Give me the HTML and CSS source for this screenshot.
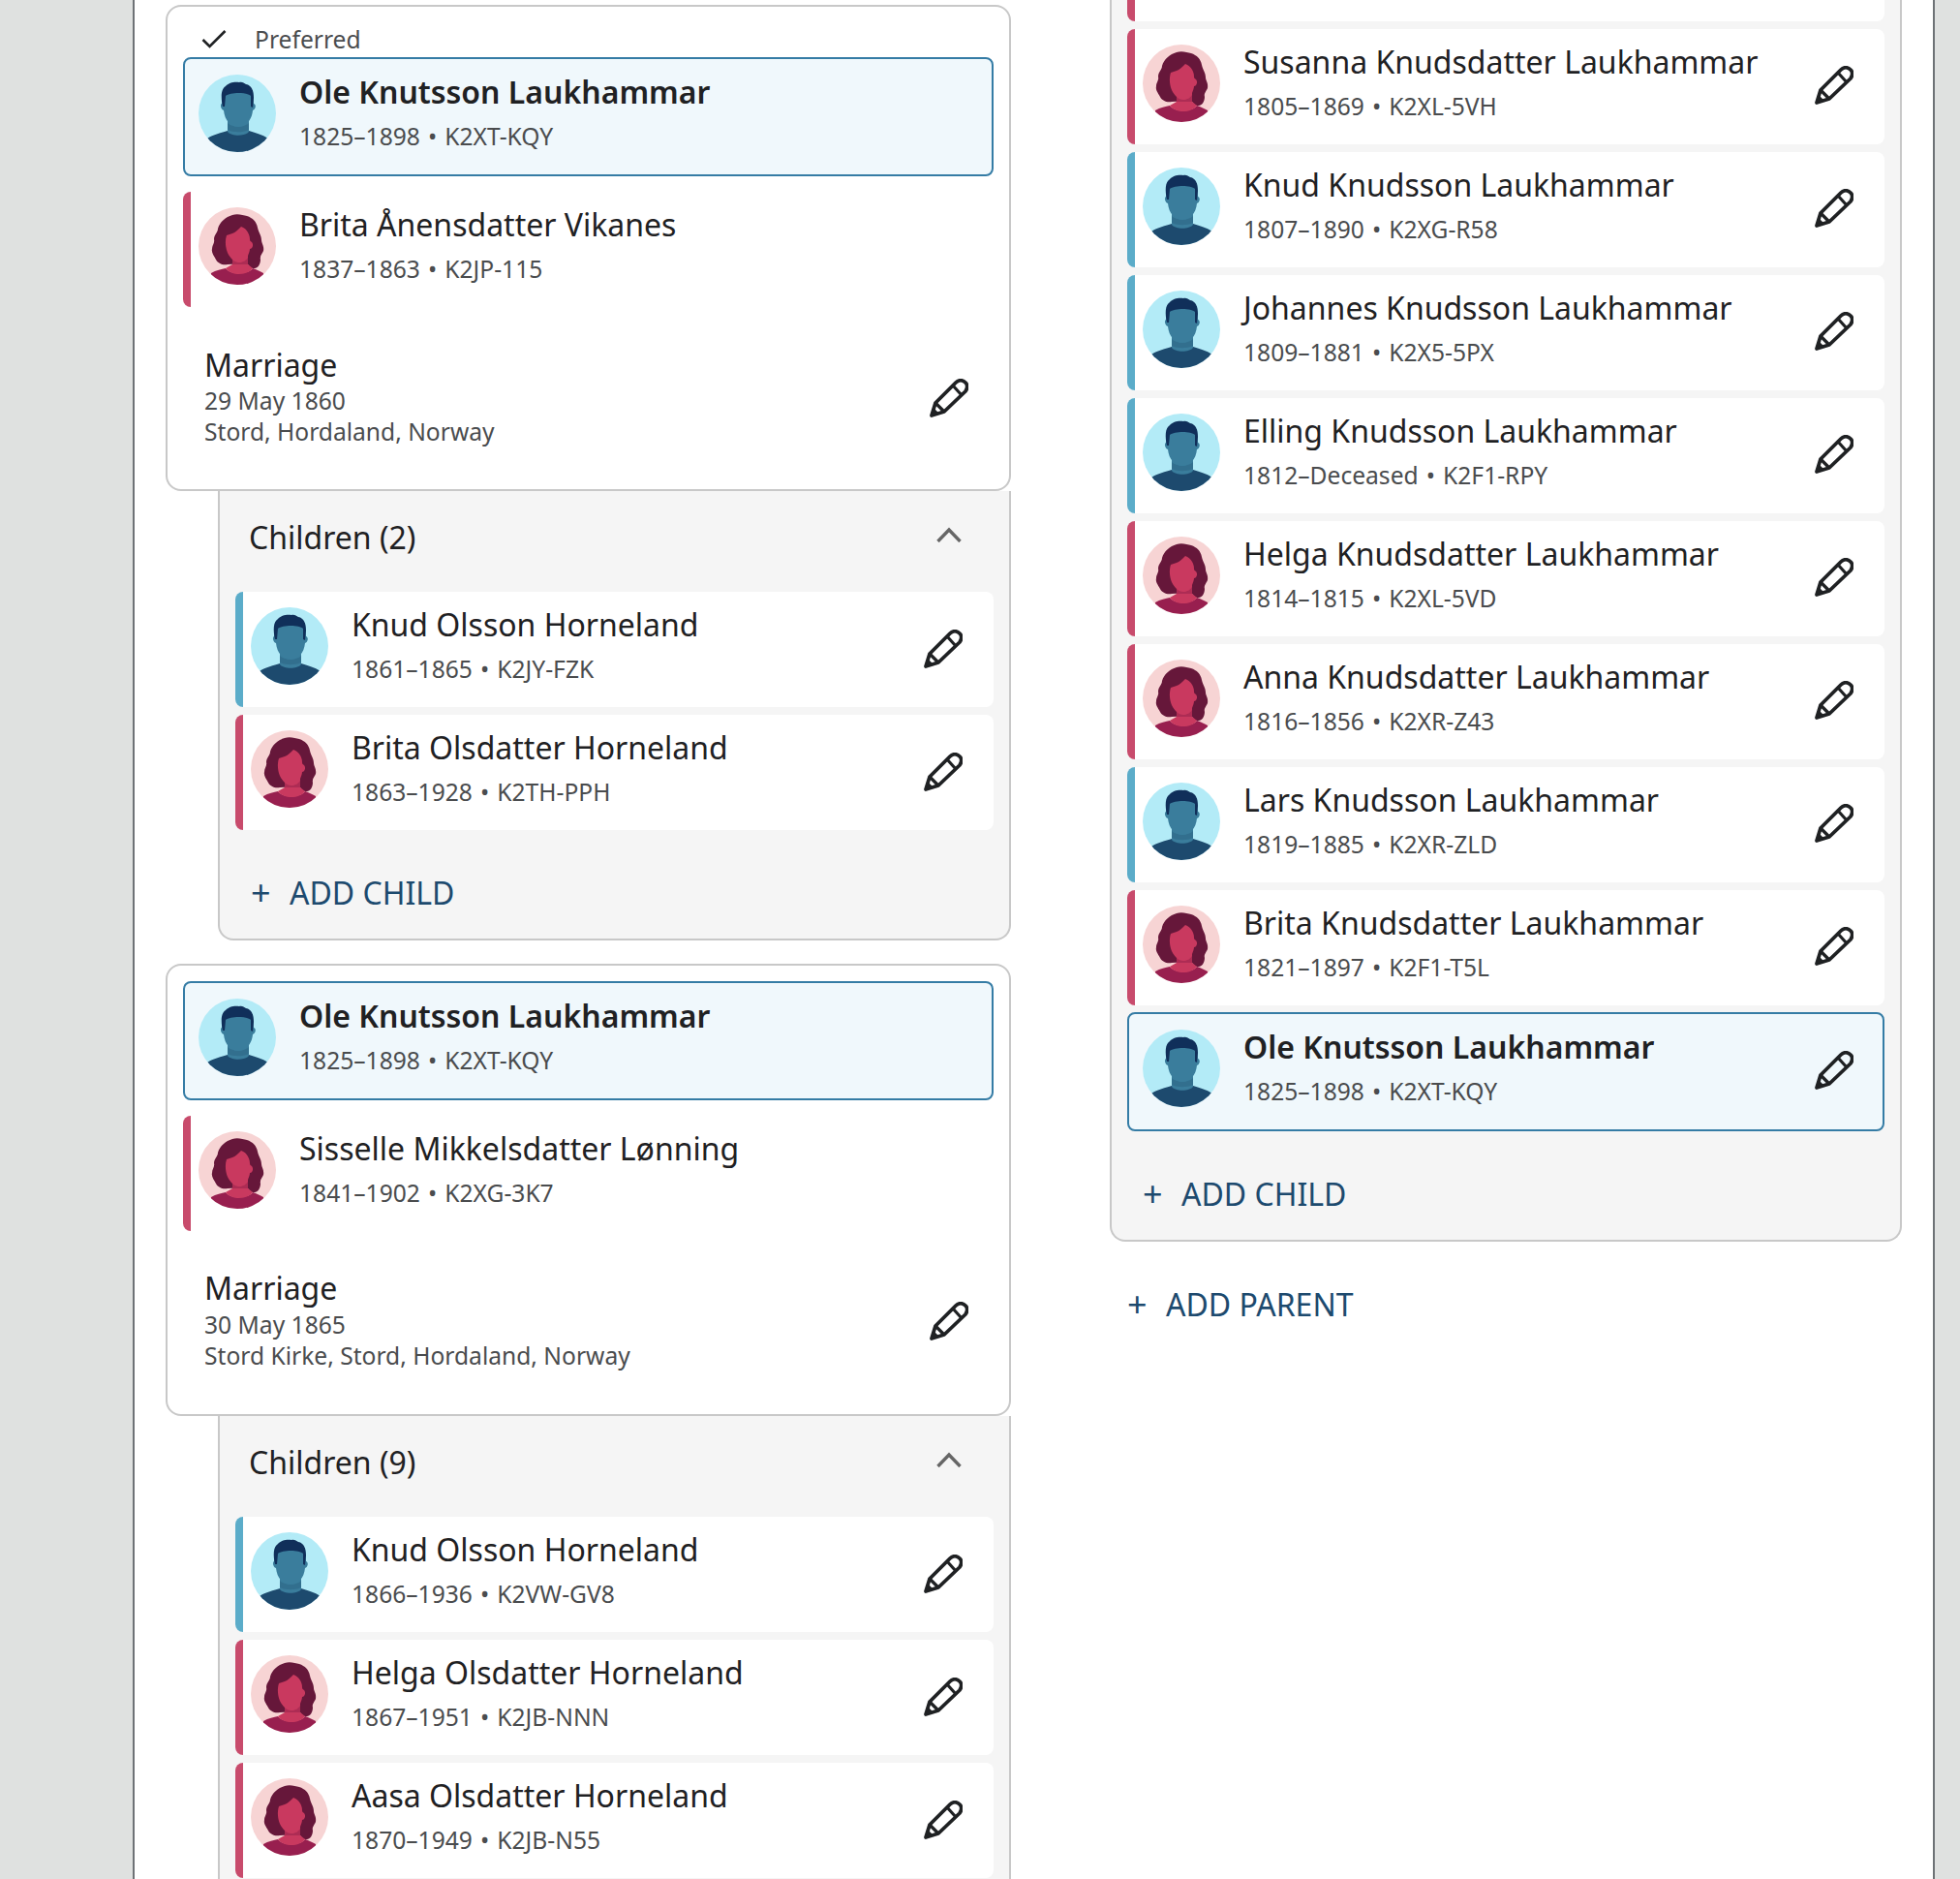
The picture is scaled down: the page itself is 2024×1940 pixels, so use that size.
FILE: index.html
```html
<!DOCTYPE html>
<html lang="en">
<head>
  <meta charset="UTF-8" />
  <title>Family Members</title>
  <link rel="stylesheet" href="styles.css">
</head>
<body>
  <svg class="defs" width="0" height="0">
    <defs>
      <clipPath id="disc"><circle cx="40" cy="40" r="40"/></clipPath>
      <symbol id="male" viewBox="0 0 80 80">
        <circle cx="40" cy="40" r="40" fill="#b3ebf7"/>
        <g clip-path="url(#disc)">
          <path d="M9 66 C15 62 24 60 30 58 L52 58 C58 60 66 62 72 66 L72 80 L9 80 Z" fill="#1d4a6e"/>
          <path d="M30 46 L52 46 L52 59 C48 64 34 64 30 59 Z" fill="#3a7d9c"/>
          <path d="M30 50 C35 55 47 55 52 50 L52 57 C46 60 36 60 30 57 Z" fill="#326f8e"/>
          <path d="M24 30 C22 31 23 36 26 37 C27 47 33 54 41 54 C49 54 55 47 56 37 C59 36 60 31 57 30 L56 16 L26 16 Z" fill="#3a7d9c"/>
          <path d="M25 33 C23 24 23 15 28 12 C31 8 38 7 42 8 C45 7 47 9 49 10 C55 11 57 17 57 24 L56 34 L54 33 L54 22 C50 18 33 18 28 22 L27 33 Z" fill="#102f5a"/>
        </g>
      </symbol>
      <symbol id="female" viewBox="0 0 80 80">
        <circle cx="40" cy="40" r="40" fill="#f7d4d4"/>
        <g clip-path="url(#disc)">
          <path d="M35 8 C40 6 46 8 50 9 C56 11 60 15 61 21 C62 26 65 29 65 34 C65 37 68 40 67 45 C66 48 63 50 64 54 C64 59 61 63 58 63 C54 64 52 60 50 58 L30 59 C25 60 20 58 18 54 C16 50 13 47 14 43 C14 39 17 37 16 33 C16 28 20 26 20 22 C22 15 28 10 35 8 Z" fill="#66173a"/>
          <path d="M35 50 L51 50 L51 70 L35 70 Z" fill="#c9395f"/>
          <path d="M35 52 C39 58 47 58 51 52 L51 60 C46 64 40 64 35 60 Z" fill="#ad2c54"/>
          <path d="M13 68 C18 65 24 64 28 63 C33 70 51 70 56 63 C60 64 63 66 67 68 L67 80 L13 80 Z" fill="#981f4f"/>
          <path d="M28 63 L35 59 L51 59 L56 63 C50 71 34 71 28 63 Z" fill="#c9395f"/>
          <path d="M44 20 C41 23 38 26 35 27 C33 28 31 28 29 29 C27 35 28 42 30 47 C33 53 37 57 42 57 C46 57 49 55 51 50 C52 47 53 45 53 43 C56 43 57 38 55 36 C54 35 53 35 53 33 C53 28 50 22 44 20 Z" fill="#c9395f"/>
        </g>
      </symbol>
      <symbol id="pencil" viewBox="0 0 40 40">
        <path d="M2 38 L6 25 L27 4 C30 1 34 1 37 4 C40 7 39 10 37 13 L15 34 Z" fill="none" stroke="currentColor" stroke-width="3.8" stroke-linejoin="round"/>
        <path d="M6 25 L15 34 M24 7 L33 17" fill="none" stroke="currentColor" stroke-width="3.2"/>
        <path d="M2 38 L4 30 L10 36 Z" fill="currentColor"/>
      </symbol>
    </defs>
  </svg>

  <main class="page">
    <section class="column">
      <div class="couple">
        <div class="preferred">
          <svg class="check" viewBox="0 0 26 20"><path d="M1.5 11 L8.5 18 L24.5 2" fill="none" stroke="currentColor" stroke-width="2.6"/></svg>
          <span>Preferred</span>
        </div>
        <div class="person selected">
          <svg class="avatar"><use href="#male"/></svg>
          <div class="who"><div class="name">Ole Knutsson Laukhammar</div><div class="sub">1825–1898 • K2XT-KQY</div></div>
        </div>
        <div class="person female spouse">
          <svg class="avatar"><use href="#female"/></svg>
          <div class="who"><div class="name">Brita Ånensdatter Vikanes</div><div class="sub">1837–1863 • K2JP-115</div></div>
        </div>
        <div class="event">
          <div class="event-text">
            <div class="event-title">Marriage</div>
            <div class="event-line">29 May 1860</div>
            <div class="event-line">Stord, Hordaland, Norway</div>
          </div>
          <svg class="pencil"><use href="#pencil"/></svg>
        </div>
      </div>
      <div class="children">
        <div class="children-head">
          <span>Children (2)</span>
          <svg class="chevron" viewBox="0 0 26 16"><path d="M1.5 15 L13 3 L24.5 15" fill="none" stroke="currentColor" stroke-width="3.4"/></svg>
        </div>
        <div class="list">
          <div class="person male">
            <svg class="avatar"><use href="#male"/></svg>
            <div class="who"><div class="name">Knud Olsson Horneland</div><div class="sub">1861–1865 • K2JY-FZK</div></div>
            <svg class="pencil"><use href="#pencil"/></svg>
          </div>
          <div class="person female">
            <svg class="avatar"><use href="#female"/></svg>
            <div class="who"><div class="name">Brita Olsdatter Horneland</div><div class="sub">1863–1928 • K2TH-PPH</div></div>
            <svg class="pencil"><use href="#pencil"/></svg>
          </div>
        </div>
        <div class="add add-child"><span class="plus">+</span>ADD CHILD</div>
      </div>

      <div class="couple second">
        <div class="person selected">
          <svg class="avatar"><use href="#male"/></svg>
          <div class="who"><div class="name">Ole Knutsson Laukhammar</div><div class="sub">1825–1898 • K2XT-KQY</div></div>
        </div>
        <div class="person female spouse">
          <svg class="avatar"><use href="#female"/></svg>
          <div class="who"><div class="name">Sisselle Mikkelsdatter Lønning</div><div class="sub">1841–1902 • K2XG-3K7</div></div>
        </div>
        <div class="event">
          <div class="event-text">
            <div class="event-title">Marriage</div>
            <div class="event-line">30 May 1865</div>
            <div class="event-line">Stord Kirke, Stord, Hordaland, Norway</div>
          </div>
          <svg class="pencil"><use href="#pencil"/></svg>
        </div>
      </div>
      <div class="children runs-on">
        <div class="children-head">
          <span>Children (9)</span>
          <svg class="chevron" viewBox="0 0 26 16"><path d="M1.5 15 L13 3 L24.5 15" fill="none" stroke="currentColor" stroke-width="3.4"/></svg>
        </div>
        <div class="list">
          <div class="person male">
            <svg class="avatar"><use href="#male"/></svg>
            <div class="who"><div class="name">Knud Olsson Horneland</div><div class="sub">1866–1936 • K2VW-GV8</div></div>
            <svg class="pencil"><use href="#pencil"/></svg>
          </div>
          <div class="person female">
            <svg class="avatar"><use href="#female"/></svg>
            <div class="who"><div class="name">Helga Olsdatter Horneland</div><div class="sub">1867–1951 • K2JB-NNN</div></div>
            <svg class="pencil"><use href="#pencil"/></svg>
          </div>
          <div class="person female">
            <svg class="avatar"><use href="#female"/></svg>
            <div class="who"><div class="name">Aasa Olsdatter Horneland</div><div class="sub">1870–1949 • K2JB-N55</div></div>
            <svg class="pencil"><use href="#pencil"/></svg>
          </div>
        </div>
      </div>
    </section>

    <section class="column right">
      <div class="children">
        <div class="list">
          <div class="person female"></div>
          <div class="person female">
            <svg class="avatar"><use href="#female"/></svg>
            <div class="who"><div class="name">Susanna Knudsdatter Laukhammar</div><div class="sub">1805–1869 • K2XL-5VH</div></div>
            <svg class="pencil"><use href="#pencil"/></svg>
          </div>
          <div class="person male">
            <svg class="avatar"><use href="#male"/></svg>
            <div class="who"><div class="name">Knud Knudsson Laukhammar</div><div class="sub">1807–1890 • K2XG-R58</div></div>
            <svg class="pencil"><use href="#pencil"/></svg>
          </div>
          <div class="person male">
            <svg class="avatar"><use href="#male"/></svg>
            <div class="who"><div class="name">Johannes Knudsson Laukhammar</div><div class="sub">1809–1881 • K2X5-5PX</div></div>
            <svg class="pencil"><use href="#pencil"/></svg>
          </div>
          <div class="person male">
            <svg class="avatar"><use href="#male"/></svg>
            <div class="who"><div class="name">Elling Knudsson Laukhammar</div><div class="sub">1812–Deceased • K2F1-RPY</div></div>
            <svg class="pencil"><use href="#pencil"/></svg>
          </div>
          <div class="person female">
            <svg class="avatar"><use href="#female"/></svg>
            <div class="who"><div class="name">Helga Knudsdatter Laukhammar</div><div class="sub">1814–1815 • K2XL-5VD</div></div>
            <svg class="pencil"><use href="#pencil"/></svg>
          </div>
          <div class="person female">
            <svg class="avatar"><use href="#female"/></svg>
            <div class="who"><div class="name">Anna Knudsdatter Laukhammar</div><div class="sub">1816–1856 • K2XR-Z43</div></div>
            <svg class="pencil"><use href="#pencil"/></svg>
          </div>
          <div class="person male">
            <svg class="avatar"><use href="#male"/></svg>
            <div class="who"><div class="name">Lars Knudsson Laukhammar</div><div class="sub">1819–1885 • K2XR-ZLD</div></div>
            <svg class="pencil"><use href="#pencil"/></svg>
          </div>
          <div class="person female">
            <svg class="avatar"><use href="#female"/></svg>
            <div class="who"><div class="name">Brita Knudsdatter Laukhammar</div><div class="sub">1821–1897 • K2F1-T5L</div></div>
            <svg class="pencil"><use href="#pencil"/></svg>
          </div>
          <div class="person selected">
            <svg class="avatar"><use href="#male"/></svg>
            <div class="who"><div class="name">Ole Knutsson Laukhammar</div><div class="sub">1825–1898 • K2XT-KQY</div></div>
            <svg class="pencil"><use href="#pencil"/></svg>
          </div>
        </div>
        <div class="add add-child"><span class="plus">+</span>ADD CHILD</div>
      </div>
      <div class="add add-parent"><span class="plus">+</span>ADD PARENT</div>
    </section>
  </main>
</body>
</html>
```

FILE: styles.css
```css
html, body {
  height: 100%;
}

body {
  margin: 0;
  background: #dfe1e0;
  font-family: "Noto Sans", sans-serif;
  color: #1f2123;
  overflow: hidden;
}

.defs {
  display: block;
  height: 0;
}

.page {
  display: flex;
  gap: 48px;
  box-sizing: border-box;
  width: 1861px;
  height: 1940px;
  margin-left: 137px;
  padding-left: 32px;
  background: #fff;
  border-left: 2px solid #6e7276;
  border-right: 2px solid #6e7276;
  overflow: hidden;
}

.column {
  flex: none;
  width: 873px;
  padding-top: 5px;
}

.column.right {
  width: 872px;
  margin-top: -135px;
}

.column.right .children {
  padding-top: 33px;
}

.column.right .selected {
  margin-top: -1px;
}

.column.right .pencil {
  margin-top: -19px;
}

.column.right .selected .pencil {
  margin-right: 30px;
}

/* couple card */
.couple {
  box-sizing: border-box;
  background: #fff;
  border: 2px solid #c8c8c8;
  border-radius: 16px;
  padding: 16px;
}

.couple.second {
  margin-top: 24px;
}

.couple.second .event {
  padding: 37px 0 28px 22px;
}

.couple.second .event-title {
  line-height: 44px;
}

.preferred {
  display: flex;
  align-items: center;
  box-sizing: border-box;
  height: 36px;
  padding-bottom: 2px;
  color: #4a4c4e;
  font-size: 24.6px;
}

.check {
  width: 26px;
  height: 20px;
  margin: 0 29px 0 19px;
  color: #1f2123;
}

.person {
  display: flex;
  align-items: flex-start;
  position: relative;
  box-sizing: border-box;
  height: 119px;
  padding: 16px 0 0 16px;
  background: #fff;
  border-radius: 8px;
}

.person.male::before, .person.female::before {
  content: "";
  position: absolute;
  left: 0;
  top: 0;
  bottom: 0;
  width: 8px;
  border-radius: 8px 0 0 8px;
}

.person.male::before {
  background: #5bacc9;
}

.person.female::before {
  background: #c84b6c;
}

.person.selected {
  height: 123px;
  padding: 16px 0 0 14px;
  background: #f0f8fc;
  border: 2px solid #357ca5;
}

.person.spouse {
  margin-top: 16px;
}

.avatar {
  flex: none;
  width: 80px;
  height: 80px;
}

.who {
  flex: 1;
  margin: -2px 0 0 24px;
}

.name {
  font-size: 32px;
  line-height: 40px;
}

.selected .name {
  font-weight: 600;
}

.sub {
  margin-top: 10px;
  color: #4a4c4e;
  font-size: 24.6px;
  line-height: 32px;
  word-spacing: 1.7px;
}

.pencil {
  flex: none;
  width: 40px;
  height: 40px;
  align-self: center;
  margin: -17px 32px 0 0;
  color: #1f2123;
}

/* marriage */
.event {
  display: flex;
  align-items: center;
  justify-content: space-between;
  padding: 38px 0 27px 22px;
}

.event .pencil {
  margin: 4px 26px 0 0;
}

.event-title {
  font-size: 32px;
  line-height: 43px;
}

.event-line {
  color: #4a4c4e;
  font-size: 24.6px;
  line-height: 32px;
}

/* children panel */
.children {
  box-sizing: border-box;
  margin-left: 54px;
  background: #f5f5f5;
  border: 2px solid #c8c8c8;
  border-top: none;
  border-radius: 0 0 16px 16px;
  padding: 0 16px;
}

.children.runs-on {
  padding-bottom: 60px;
}

.children-head {
  display: flex;
  align-items: center;
  justify-content: space-between;
  height: 104px;
  padding: 0 33px 9px 14px;
  box-sizing: border-box;
  font-size: 32px;
}

.chevron {
  width: 26px;
  height: 16px;
  margin-top: -5px;
  color: #666;
}

.list {
  display: flex;
  flex-direction: column;
  gap: 8px;
}

.add {
  display: flex;
  align-items: center;
  color: #1d4a6e;
  font-size: 32px;
  line-height: 40px;
}

.plus {
  width: 40px;
  font-size: 36px;
}

.add-child {
  padding: 45px 0 27px 16px;
}

.add-parent {
  margin: 45px 0 0 72px;
}
```
